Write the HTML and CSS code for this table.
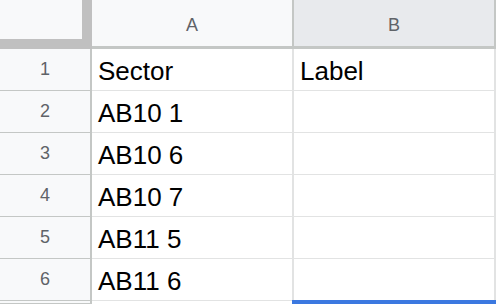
FILE: index.html
```html
<!DOCTYPE html>
<html lang="en">
<head>
  <meta charset="UTF-8" />
  <title>Sectors</title>
  <link rel="stylesheet" href="styles.css">
</head>
<body>

  <div class="sheet">
    <!-- header row -->
    <div class="corner"><div class="corner-inner"></div></div>
    <div class="col-head">A</div>
    <div class="col-head active">B</div>

    <div class="row-head">1</div>
    <div class="cell">Sector</div>
    <div class="cell">Label</div>

    <div class="row-head">2</div>
    <div class="cell">AB10 1</div>
    <div class="cell"></div>

    <div class="row-head">3</div>
    <div class="cell">AB10 6</div>
    <div class="cell"></div>

    <div class="row-head">4</div>
    <div class="cell">AB10 7</div>
    <div class="cell"></div>

    <div class="row-head">5</div>
    <div class="cell">AB11 5</div>
    <div class="cell"></div>

    <div class="row-head">6</div>
    <div class="cell">AB11 6</div>
    <div class="cell"></div>

    <!-- top edge of row 7, where the selection starts -->
    <div class="row-head"></div>
    <div class="cell"></div>
    <div class="cell selected"></div>
  </div>

</body>
</html>
```

FILE: styles.css
```css
:root {
  --head-bg: #f8f9fa;
  --head-line: #c4c7c5;
  --grid-line: #e2e3e3;
  --head-text: #5f6368;
  --select: #3b78e0;
}

body {
  margin: 0;
  padding: 0;
  background: #ffffff;
  font-family: "Liberation Sans", Arial, sans-serif;
  overflow: hidden;
}

.sheet {
  display: grid;
  grid-template-columns: 92px 202px 202px;
  grid-template-rows: 49px repeat(6, 42px) 3px;
}

/* freeze handle in the top-left corner */
.corner {
  background: #c0c0c0;
}

.corner-inner {
  width: 82px;
  height: 39px;
  background: var(--head-bg);
}

.col-head {
  display: flex;
  align-items: center;
  justify-content: center;
  padding-top: 4px;
  box-sizing: border-box;
  background: var(--head-bg);
  border-right: 2px solid var(--head-line);
  border-bottom: 3px solid var(--head-line);
  color: var(--head-text);
  font-size: 18px;
}

.col-head.active {
  background: #e8eaed;
}

.row-head {
  display: flex;
  align-items: center;
  justify-content: center;
  box-sizing: border-box;
  background: var(--head-bg);
  border-right: 2px solid var(--head-line);
  border-bottom: 1px solid var(--head-line);
  color: var(--head-text);
  font-size: 18px;
  padding-bottom: 1px;
}

.cell {
  position: relative;
  display: flex;
  align-items: flex-end;
  box-sizing: border-box;
  padding: 0 6px 4px 6px;
  border-right: 2px solid var(--grid-line);
  border-bottom: 1px solid var(--grid-line);
  color: #000000;
  font-size: 26px;
  line-height: 30px;
}

.cell.selected::before {
  content: "";
  position: absolute;
  top: -1px;
  left: -2px;
  right: -2px;
  height: 4px;
  background: var(--select);
}
```
